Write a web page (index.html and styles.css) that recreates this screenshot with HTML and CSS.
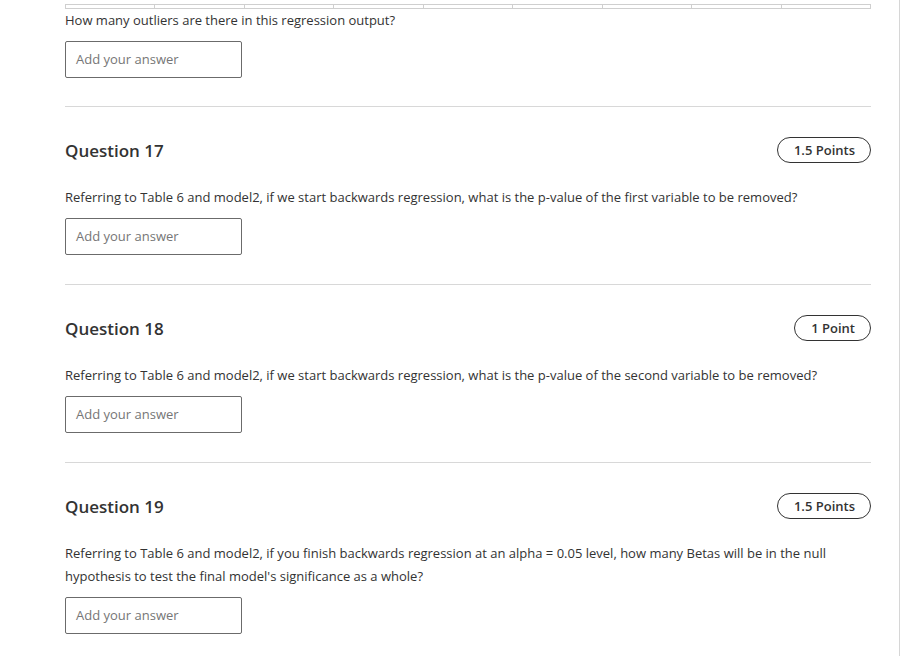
FILE: index.html
```html
<!DOCTYPE html>
<html>
<head>
<meta charset="utf-8">
<link rel="stylesheet" href="styles.css">
</head>
<body>
<div class="page">
  <div class="content">
    <div class="prev">
      <table class="data-table">
        <tr><td></td><td></td><td></td><td></td><td></td><td></td><td></td><td></td><td></td></tr>
      </table>
      <p class="qtext">How many outliers are there in this regression output?</p>
      <div class="answer">Add your answer</div>
    </div>

    <section class="question">
      <div class="qhead">
        <h2 class="qtitle">Question 17</h2>
        <span class="points">1.5 Points</span>
      </div>
      <p class="qtext">Referring to Table 6 and model2, if we start backwards regression, what is the p-value of the first variable to be removed?</p>
      <div class="answer">Add your answer</div>
    </section>

    <section class="question">
      <div class="qhead">
        <h2 class="qtitle">Question 18</h2>
        <span class="points">1 Point</span>
      </div>
      <p class="qtext">Referring to Table 6 and model2, if we start backwards regression, what is the p-value of the second variable to be removed?</p>
      <div class="answer">Add your answer</div>
    </section>

    <section class="question">
      <div class="qhead">
        <h2 class="qtitle">Question 19</h2>
        <span class="points">1.5 Points</span>
      </div>
      <p class="qtext">Referring to Table 6 and model2, if you finish backwards regression at an alpha = 0.05 level, how many Betas will be in the null hypothesis to test the final model's significance as a whole?</p>
      <div class="answer">Add your answer</div>
    </section>
  </div>
</div>
</body>
</html>
```

FILE: styles.css
```css
* { box-sizing: border-box; }
html, body {
  margin: 0;
  padding: 0;
  background: #fff;
  font-family: "Open Sans", "Noto Sans", sans-serif;
  color: #333;
}
.page {
  width: 900px;
  min-height: 656px;
  border-right: 1px solid #d6d6d6;
}
.content {
  padding: 0 29px 0 65px;
  width: 900px;
}
.prev {
  padding-top: 4px;
  padding-bottom: 28px;
}
.data-table {
  width: 806px;
  border-collapse: collapse;
  table-layout: fixed;
}
.data-table td {
  height: 4px;
  padding: 0;
  border: 1px solid #cfcfcf;
}
.qtext {
  margin: 0;
  font-size: 13px;
  line-height: 23px;
  color: #333;
}
.answer {
  margin-top: 9px;
  width: 177px;
  height: 37px;
  border: 1px solid #6b6b6b;
  border-radius: 2px;
  padding: 0 10px;
  font-size: 13px;
  line-height: 35px;
  color: #767676;
}
.question {
  border-top: 1px solid #d8d8d8;
  padding-top: 30px;
  padding-bottom: 29px;
}
.qhead {
  display: flex;
  justify-content: space-between;
  align-items: center;
  height: 26px;
}
.qtitle {
  margin: 0;
  font-size: 17px;
  font-weight: 600;
  color: #333;
}
.points {
  height: 26px;
  padding: 0 15px 0 16px;
  border: 1px solid #333;
  border-radius: 13px;
  font-size: 13px;
  font-weight: 600;
  line-height: 24px;
  color: #333;
}
.question .qtext {
  margin-top: 23px;
}
```
